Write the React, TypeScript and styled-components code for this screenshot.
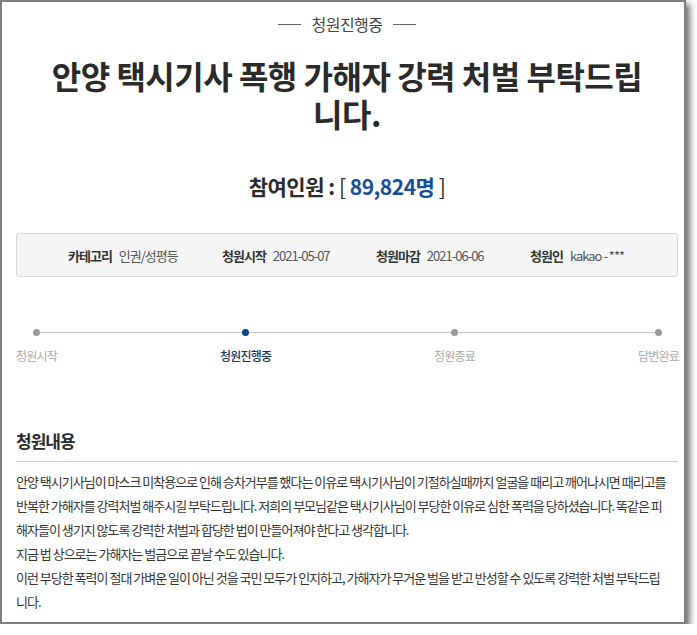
import React from 'react'
import styled, { createGlobalStyle } from 'styled-components'

const GlobalStyle = createGlobalStyle`
  html, body {
    margin: 0;
    padding: 0;
    background: #fff;
  }
  body {
    font-family: "Noto Sans CJK KR", "Noto Sans", sans-serif;
    color: #333;
  }
`;

const Panel = styled.div`
  box-sizing: border-box;
  width: 686px;
  height: 624px;
  border: 2px solid #808080;
  box-shadow: 4px 4px 6px rgba(0, 0, 0, 0.55);
  background: #fff;
  padding: 11px 6px 0 14px;
  overflow: hidden;
`;

const Status = styled.div`
  display: flex;
  align-items: center;
  justify-content: center;
  gap: 10px;
  font-size: 16px;
  line-height: 22px;
  letter-spacing: -0.5px;
  color: #444;

  &::before, &::after {
    content: '';
    width: 23px;
    height: 1px;
    background: #666;
  }
`;

const Title = styled.h1`
  margin: 21px 0 0;
  padding: 0 24px;
  font-size: 32px;
  line-height: 38px;
  font-weight: 700;
  letter-spacing: -0.5px;
  color: #2a2a2a;
  text-align: center;
`;

const Count = styled.p`
  margin: 40px 0 0;
  font-size: 21px;
  line-height: 28px;
  font-weight: 700;
  letter-spacing: -0.5px;
  color: #2a2a2a;
  text-align: center;
`;

const Bracket = styled.span`
  font-weight: 400;
`;

const Number = styled.span`
  color: #1a4e99;
`;

const InfoBox = styled.div`
  box-sizing: border-box;
  margin-top: 33px;
  height: 44px;
  display: flex;
  align-items: center;
  padding-left: 51px;
  background: #f5f5f5;
  border: 1px solid #d6d6d6;
  border-radius: 3px;
`;

const InfoItem = styled.div`
  flex: 0 0 154px;
  display: flex;
  align-items: center;
  gap: 7px;
  font-size: 13px;
  letter-spacing: -1px;
  white-space: nowrap;
`;

const InfoLabel = styled.span`
  font-weight: 700;
  color: #333;
`;

const InfoValue = styled.span`
  color: #555;
`;

const Steps = styled.div`
  position: relative;
  margin: 52px -1px 0 0;
  display: flex;
  justify-content: space-between;

  &::before {
    content: '';
    position: absolute;
    left: 21px;
    right: 22px;
    top: 3px;
    height: 1px;
    background: #c4c4c4;
  }
`;

const Step = styled.div`
  position: relative;
  display: flex;
  flex-direction: column;
  align-items: center;
`;

const Dot = styled.span<{ $active?: boolean }>`
  width: 7px;
  height: 7px;
  border-radius: 50%;
  background: ${p => (p.$active ? '#0c3f8c' : '#999')};
`;

const StepLabel = styled.span<{ $active?: boolean }>`
  margin-top: 11px;
  font-size: 12px;
  line-height: 18px;
  letter-spacing: -0.8px;
  font-weight: ${p => (p.$active ? 500 : 400)};
  color: ${p => (p.$active ? '#1f3358' : '#aaa')};
`;

const Heading = styled.h2`
  margin: 64px 0 0;
  padding-bottom: 8px;
  border-bottom: 1px solid #ccc;
  font-size: 17px;
  line-height: 24px;
  font-weight: 700;
  letter-spacing: -1px;
  color: #2a2a2a;
`;

const Body = styled.div`
  margin-top: 8px;
  padding-right: 8px;
  font-size: 13px;
  line-height: 24px;
  letter-spacing: -1px;
  color: #333;
`;

const Para = styled.p`
  margin: 0;
`;

const info = [
  ['카테고리', '인권/성평등'],
  ['청원시작', '2021-05-07'],
  ['청원마감', '2021-06-06'],
  ['청원인', 'kakao - ***'],
];

const steps = ['청원시작', '청원진행중', '청원종료', '답변완료'];

const App = () => {
  return (
    <>
      <GlobalStyle />
      <Panel>
        <Status>청원진행중</Status>
        <Title>안양 택시기사 폭행 가해자 강력 처벌 부탁드립니다.</Title>
        <Count>
          참여인원 : <Bracket>[</Bracket> <Number>89,824명</Number> <Bracket>]</Bracket>
        </Count>

        <InfoBox>
          {info.map(([label, value]) => (
            <InfoItem key={label}>
              <InfoLabel>{label}</InfoLabel>
              <InfoValue>{value}</InfoValue>
            </InfoItem>
          ))}
        </InfoBox>

        <Steps>
          {steps.map((s, i) => (
            <Step key={s}>
              <Dot $active={i === 1} />
              <StepLabel $active={i === 1}>{s}</StepLabel>
            </Step>
          ))}
        </Steps>

        <Heading>청원내용</Heading>
        <Body>
          <Para>
            안양 택시기사님이 마스크 미착용으로 인해 승차거부를 했다는 이유로 택시기사님이 기절하실때까지 얼굴을 때리고 깨어나시면 때리고를 반복한 가해자를 강력처벌 해주시길 부탁드립니다. 저희의 부모님같은 택시기사님이 부당한 이유로 심한 폭력을 당하셨습니다. 똑같은 피해자들이 생기지 않도록 강력한 처벌과 합당한 법이 만들어져야 한다고 생각합니다.
          </Para>
          <Para>지금 법 상으로는 가해자는 벌금으로 끝날 수도 있습니다.</Para>
          <Para>
            이런 부당한 폭력이 절대 가벼운 일이 아닌 것을 국민 모두가 인지하고, 가해자가 무거운 벌을 받고 반성할 수 있도록 강력한 처벌 부탁드립니다.
          </Para>
        </Body>
      </Panel>
    </>
  )
}

export default App
